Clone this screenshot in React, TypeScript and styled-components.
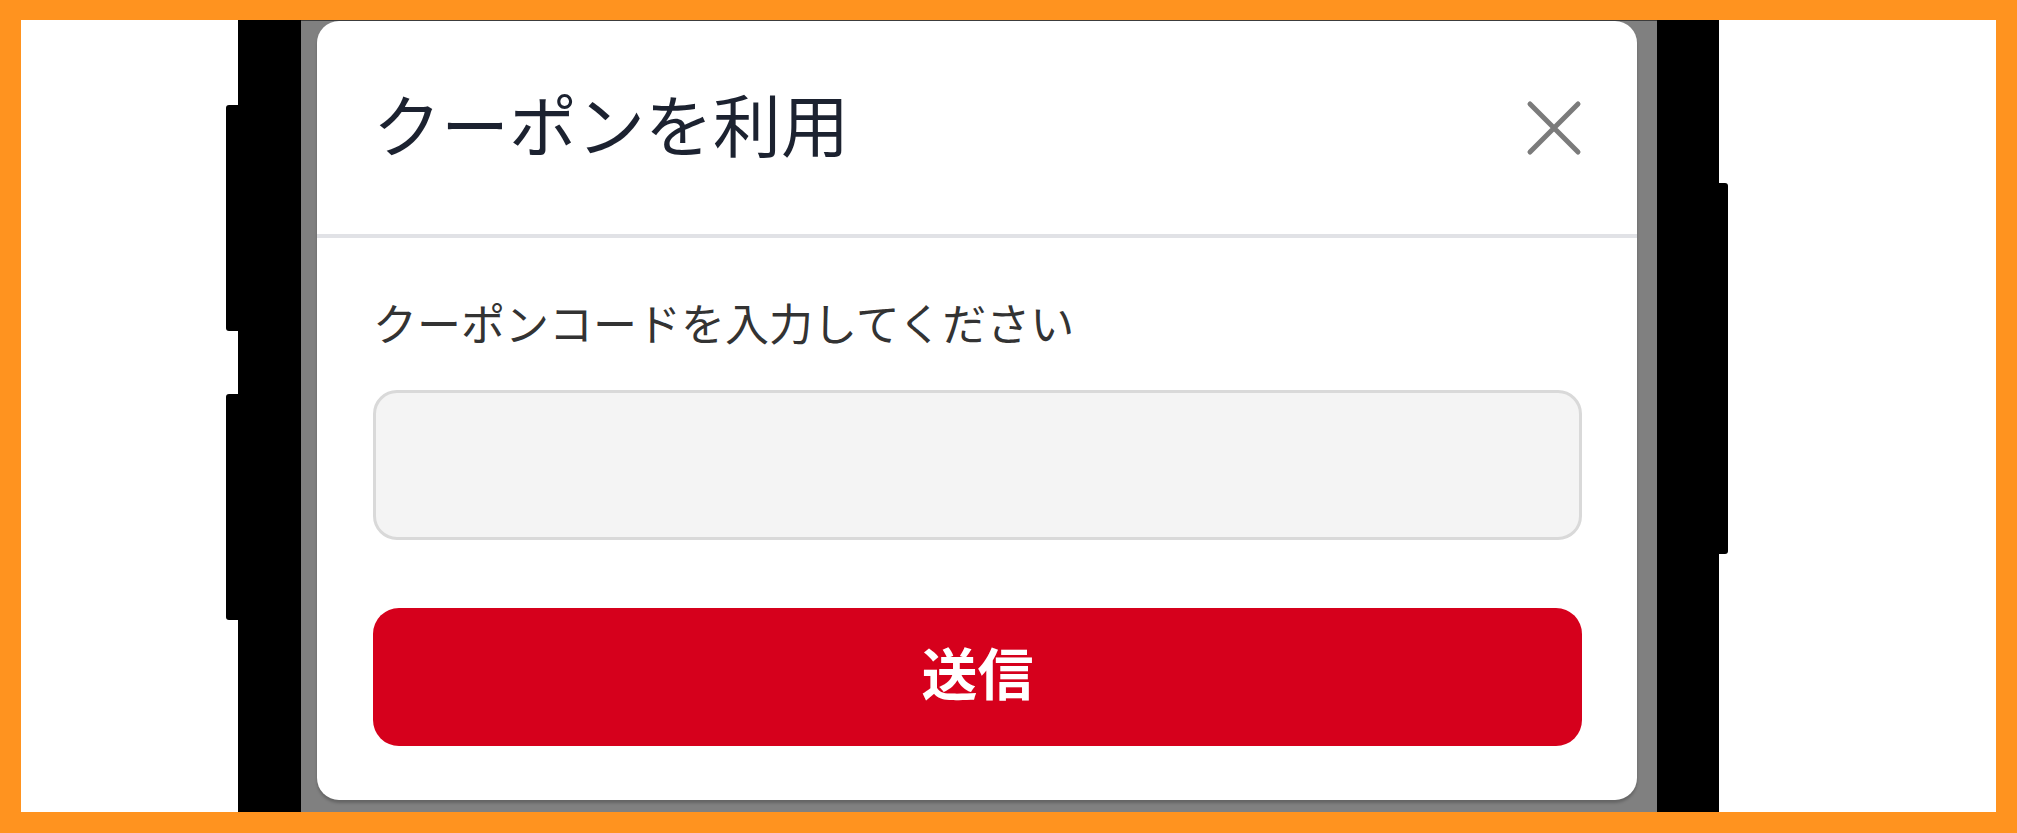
import React from 'react';
import styled, {createGlobalStyle} from 'styled-components';

const GlobalStyle = createGlobalStyle`
  html, body {
    margin: 0;
    padding: 0;
    background: #ffffff;
  }
  * {
    box-sizing: border-box;
  }
  body {
    font-family: "Noto Sans CJK JP", "Noto Sans", sans-serif;
  }
`;

const Frame = styled.div`
  width: 2017px;
  height: 833px;
  border-style: solid;
  border-color: #ff931f;
  border-width: 20px 21px 21px 21px;
  background: #ffffff;
  overflow: hidden;
  display: flex;
  padding-left: 205px;
`;

const Phone = styled.div`
  display: flex;
  align-items: stretch;
  height: 100%;
`;

const KeyRail = styled.div<{ $width: number }>`
  width: ${p => p.$width}px;
  display: flex;
  flex-direction: column;
`;

const SideKey = styled.div<{ $top: number; $height: number; $side: 'left' | 'right' }>`
  margin-top: ${p => p.$top}px;
  height: ${p => p.$height}px;
  background: #000000;
  border-radius: ${p => (p.$side === 'left' ? '3px 0 0 3px' : '0 3px 3px 0')};
`;

const Bezel = styled.div<{ $width: number }>`
  width: ${p => p.$width}px;
  background: #000000;
`;

const Screen = styled.div`
  width: 1356px;
  background: #808080;
  border-top: 1px solid #3c3c3c;
  padding-left: 16px;
`;

const Card = styled.div`
  width: 1320px;
  background: #ffffff;
  border-radius: 22px;
  box-shadow: 0 3px 3px rgba(0, 0, 0, 0.22);
  display: flex;
  flex-direction: column;
`;

const Header = styled.div`
  height: 213px;
  display: flex;
  align-items: center;
  justify-content: space-between;
  padding: 0 55px 0 56px;
`;

const Title = styled.h2`
  margin: 0 0 10px 0;
  font-size: 68px;
  line-height: 1;
  font-weight: 400;
  color: #1c2230;
  letter-spacing: 0;
`;

const CloseButton = styled.button`
  width: 56px;
  height: 56px;
  padding: 0;
  border: none;
  background: transparent;
  display: flex;
  align-items: center;
  justify-content: center;
  color: #7b7b7b;
`;

const Divider = styled.div`
  height: 4px;
  background: #e1e2e6;
`;

const Body = styled.div`
  padding: 62px 55px 54px 56px;
  display: flex;
  flex-direction: column;
`;

const Label = styled.label`
  font-size: 44px;
  line-height: 44px;
  color: #333333;
  margin-bottom: 46px;
`;

const CodeInput = styled.input`
  height: 150px;
  width: 100%;
  background: #f4f4f4;
  border: 3px solid #d9d9d9;
  border-radius: 24px;
  outline: none;
  font-size: 44px;
  padding: 0 24px;
  margin-bottom: 68px;
`;

const SubmitButton = styled.button`
  height: 138px;
  width: 100%;
  border: none;
  border-radius: 26px;
  background: #d6001c;
  color: #ffffff;
  font-family: "Noto Sans CJK JP", sans-serif;
  font-size: 56px;
  font-weight: 700;
  line-height: 1;
  padding: 0 0 12px 0;
`;

function CloseIcon() {
  return (
    <svg width="56" height="56" viewBox="0 0 56 56" fill="none">
      <path d="M4 4 L52 52 M52 4 L4 52" stroke="currentColor" strokeWidth="5" strokeLinecap="round"/>
    </svg>
  );
}

function CouponModal() {
  return (
    <Card>
      <Header>
        <Title>クーポンを利用</Title>
        <CloseButton aria-label="閉じる">
          <CloseIcon/>
        </CloseButton>
      </Header>
      <Divider/>
      <Body>
        <Label htmlFor="coupon">クーポンコードを入力してください</Label>
        <CodeInput id="coupon" type="text"/>
        <SubmitButton>送信</SubmitButton>
      </Body>
    </Card>
  );
}

export default function App() {
  return (
    <>
      <GlobalStyle/>
      <Frame>
        <Phone>
          <KeyRail $width={12}>
            <SideKey $side="left" $top={85} $height={226}/>
            <SideKey $side="left" $top={63} $height={226}/>
          </KeyRail>
          <Bezel $width={63}/>
          <Screen>
            <CouponModal/>
          </Screen>
          <Bezel $width={62}/>
          <KeyRail $width={9}>
            <SideKey $side="right" $top={163} $height={371}/>
          </KeyRail>
        </Phone>
      </Frame>
    </>
  );
}
